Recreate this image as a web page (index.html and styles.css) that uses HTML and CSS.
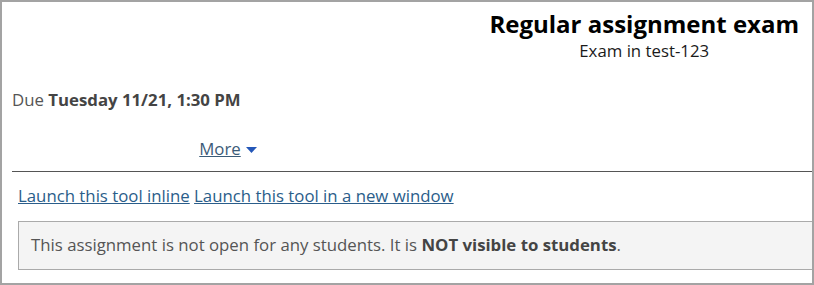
FILE: index.html
```html
<!DOCTYPE html>
<html>
<head>
<meta charset="utf-8">
<link rel="stylesheet" href="styles.css">
</head>
<body>
<div class="frame">
  <div class="header">
    <div class="heading">
      <h1 class="title">Regular assignment exam</h1>
      <div class="subtitle">Exam in test-123</div>
    </div>
  </div>
  <div class="due">Due <strong>Tuesday 11/21, 1:30 PM</strong></div>
  <div class="more-row">
    <a class="more" href="#">More</a>
    <svg class="caret" width="11" height="6" viewBox="0 0 11 6"><path d="M0 0H11L5.5 6Z" fill="#2457b8"/></svg>
  </div>
  <hr class="rule">
  <div class="body">
    <div class="links">
      <a href="#" class="link">Launch this tool inline</a> <a href="#" class="link">Launch this tool in a new window</a>
    </div>
    <div class="alert">This assignment is not open for any students. It is <strong>NOT visible to students</strong>.</div>
  </div>
</div>
</body>
</html>
```

FILE: styles.css
```css
html, body {
  margin: 0;
  padding: 0;
  background: #fff;
}

.frame {
  box-sizing: border-box;
  width: 814px;
  height: 285px;
  border: 2px solid #a3a3a3;
  overflow: hidden;
  font-family: "Open Sans", "Liberation Sans", sans-serif;
  font-size: 16.8px;
  line-height: 22px;
  color: #555;
}

.header {
  display: flex;
  justify-content: flex-end;
  padding: 6px 13px 0 0;
}

.heading {
  text-align: center;
}

.title {
  margin: 0;
  font-size: 24px;
  line-height: 32px;
  font-weight: 700;
  color: #000;
}

.subtitle {
  color: #1a1a1a;
}

.due {
  margin-top: 27px;
  padding-left: 10px;
}

.due strong {
  color: #444;
}

.more-row {
  margin-top: 27px;
  margin-left: 10px;
  width: 432px;
  display: flex;
  justify-content: center;
  align-items: center;
  gap: 5px;
}

.more {
  color: #3b5b78;
  text-decoration: underline;
}

.caret {
  display: block;
  margin-top: 2px;
}

.rule {
  margin: 11px 0 0 10px;
  border: 0;
  border-top: 1px solid #555;
  height: 0;
}

.body {
  padding-left: 16px;
  margin-top: 13px;
}

.link {
  color: #2a5d8a;
  text-decoration: underline;
}

.alert {
  margin-top: 14px;
  margin-right: -30px;
  background: #f4f4f4;
  border: 1px solid #aaa;
  padding: 12px 12px 13px;
  color: #555;
}

.alert strong {
  color: #444;
}
```
